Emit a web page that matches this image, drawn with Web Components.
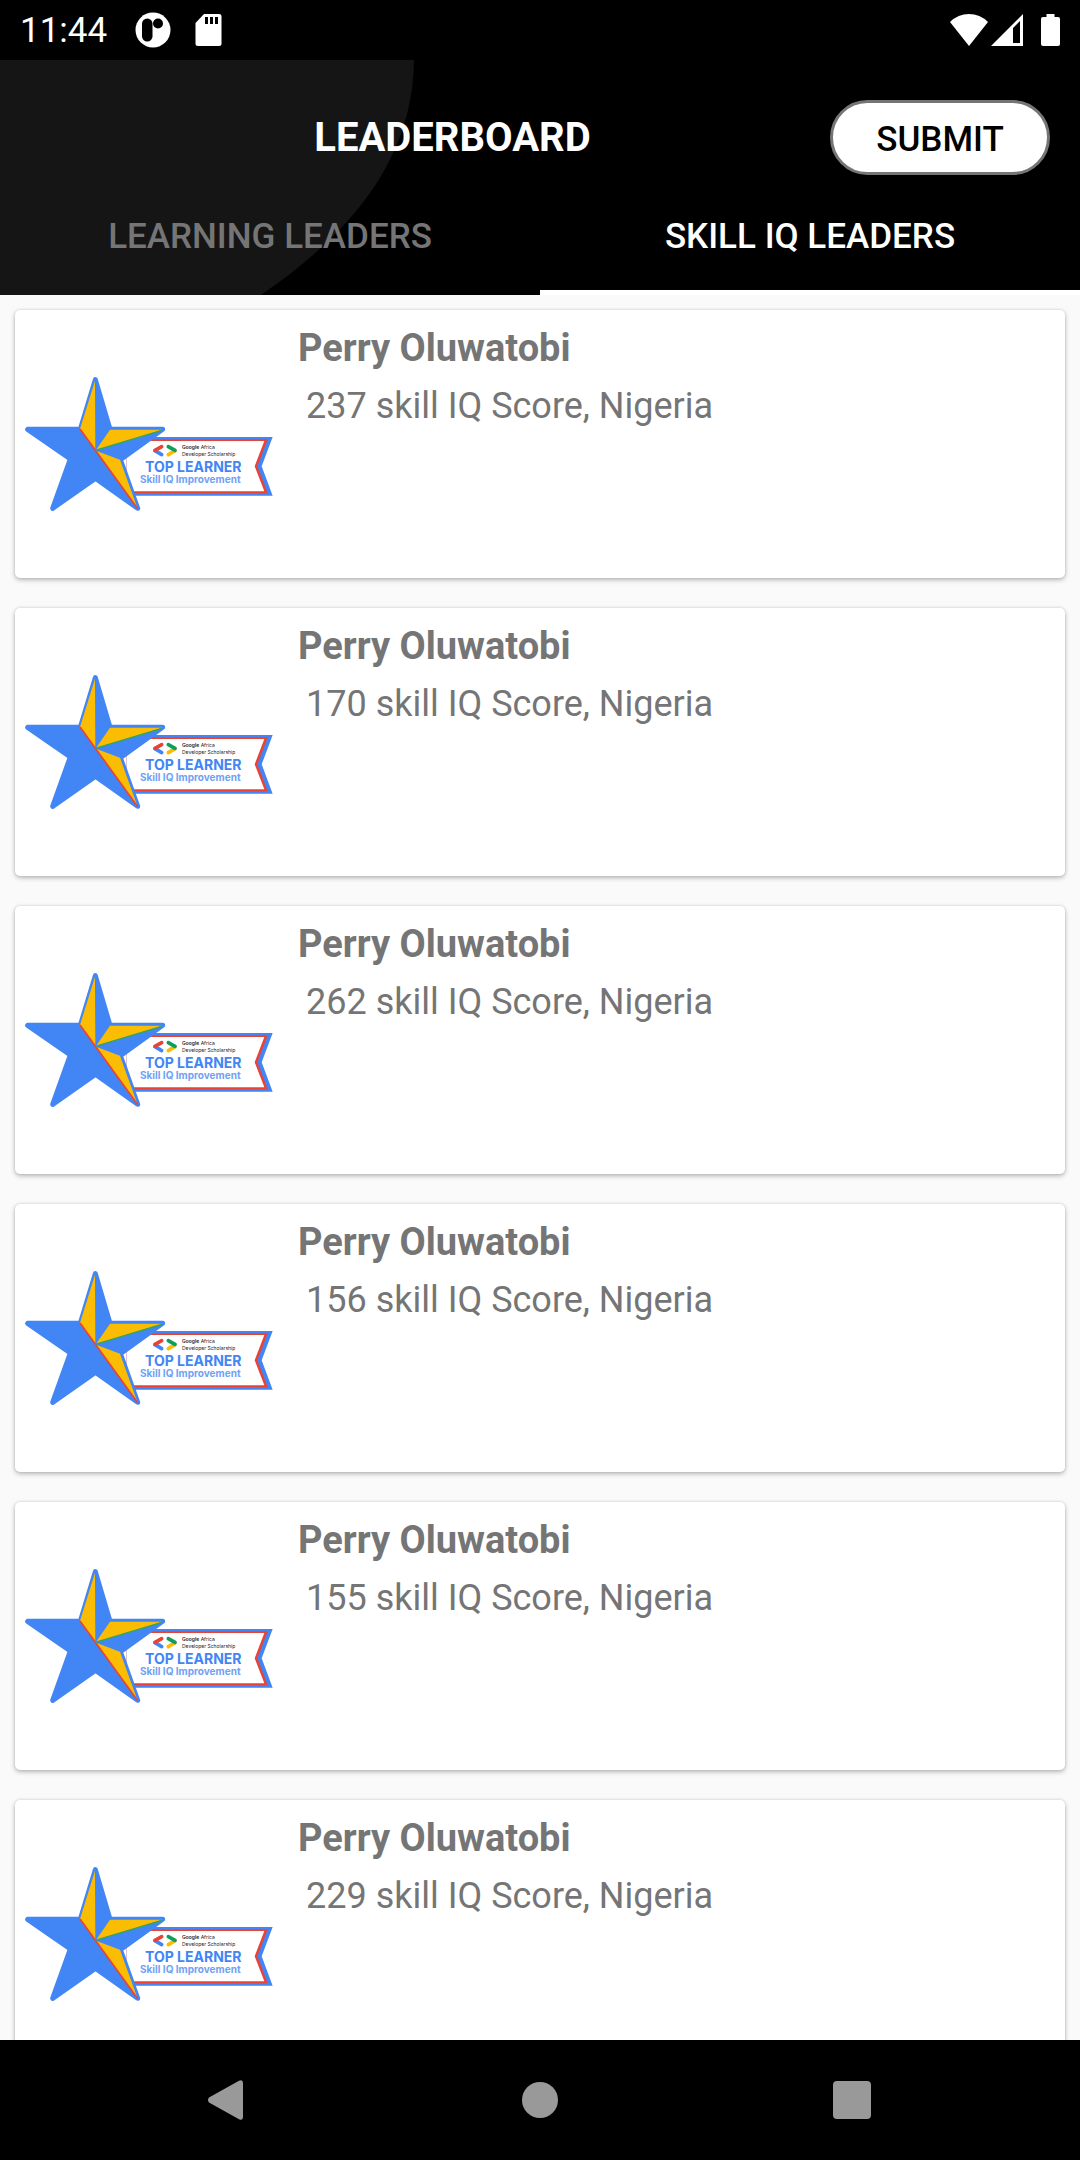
<!DOCTYPE html>
<html lang="en">
<head>
<meta charset="utf-8">
<meta name="viewport" content="width=device-width, initial-scale=1">
<title>Leaderboard</title>
<style>
  html, body { margin: 0; height: 100%; }
  body { font-family: Roboto, sans-serif; background: #fafafa; overflow: hidden; }
</style>
</head>
<body>
<leader-app>
  <status-bar slot="status">11:44</status-bar>
  <app-header slot="header">
    LEADERBOARD
    <app-tab slot="tabs">LEARNING LEADERS</app-tab>
    <app-tab slot="tabs" selected>SKILL IQ LEADERS</app-tab>
  </app-header>
  <leader-card><span slot="name">Perry Oluwatobi</span>237 skill IQ Score, Nigeria</leader-card>
  <leader-card><span slot="name">Perry Oluwatobi</span>170 skill IQ Score, Nigeria</leader-card>
  <leader-card><span slot="name">Perry Oluwatobi</span>262 skill IQ Score, Nigeria</leader-card>
  <leader-card><span slot="name">Perry Oluwatobi</span>156 skill IQ Score, Nigeria</leader-card>
  <leader-card><span slot="name">Perry Oluwatobi</span>155 skill IQ Score, Nigeria</leader-card>
  <leader-card><span slot="name">Perry Oluwatobi</span>229 skill IQ Score, Nigeria</leader-card>
  <nav-bar slot="nav"></nav-bar>
</leader-app>

<script>
const define = (name, html, setup) => {
  const template = document.createElement('template');
  template.innerHTML = html;
  customElements.define(name, class extends HTMLElement {
    constructor() {
      super();
      this.attachShadow({ mode: 'open' }).append(template.content.cloneNode(true));
    }
    connectedCallback() { if (setup) setup(this); }
  });
};

define('leader-app', `
<style>
  :host { display: flex; flex-direction: column; height: 100vh; }
  main { flex: 1; min-height: 0; overflow: hidden; display: flex; flex-direction: column; gap: 30px; padding: 15px 15px 0; box-sizing: border-box; }
</style>
<slot name="status"></slot>
<slot name="header"></slot>
<main><slot></slot></main>
<slot name="nav"></slot>`);

define('status-bar', `
<style>
  :host { display: flex; align-items: center; justify-content: space-between; height: 60px; padding: 0 20px; background: #000; color: #fff; font-size: 35px; line-height: 60px; }
  div { display: flex; align-items: center; }
  time { padding-top: 2px; margin-right: 4px; }
  .left svg { margin-left: 24px; }
  svg { display: block; }
  .battery { margin-left: 18px; }
  .signal { margin-left: 3px; }
</style>
<div class="left">
  <time><slot></slot></time>
  <svg width="36" height="36" viewBox="0 0 36 36" aria-hidden="true"><circle cx="18" cy="18" r="17.5" fill="#fff"/><rect x="7" y="6.500" width="10.500" height="23" rx="5.200" fill="#000"/><circle cx="23" cy="11.500" r="5" fill="#000"/></svg>
  <svg width="27" height="34" viewBox="0 0 27 34" aria-hidden="true"><path d="M9 1H24Q26.500 1 26.500 3.500V30.500Q26.500 33 24 33H3Q.5 33 .5 30.500V10Z" fill="#fff"/><path d="M10 4h3v7h-3zM15 4h3v7h-3zM20 4h3v7h-3z" fill="#000"/></svg>
</div>
<div>
  <svg width="38" height="34" viewBox="0 0 38 34" aria-hidden="true"><path d="M0 9Q8 1 19 1T38 9L19 33Z" fill="#fff"/></svg>
  <svg class="signal" width="32" height="34" viewBox="0 0 32 34" aria-hidden="true"><path fill-rule="evenodd" d="M0 33L32 1V33ZM22 15V30H29V8Z" fill="#fff"/></svg>
  <svg class="battery" width="19" height="34" viewBox="0 0 19 34" aria-hidden="true"><path d="M5.500 1H13.500V4H17Q19 4 19 6V31Q19 33 17 33H2Q0 33 0 31V6Q0 4 2 4H5.500Z" fill="#fff"/></svg>
</div>`);

define('app-header', `
<style>
  :host { display: block; position: relative; background: #000; color: #fff; }
  .arc { position: absolute; top: 0; left: 0; }
  .bar { position: relative; display: flex; align-items: center; padding: 40px 30px 0 75px; }
  h1 { flex: 1; margin: 0; text-align: center; font-size: 40px; line-height: 48px; font-weight: 700; }
  button { box-sizing: border-box; height: 75px; width: 220px; padding: 4px 0 0; border: 3px solid #757575; border-radius: 38px; background: #fff; color: #000; font: 500 35px/40px Roboto, sans-serif; }
  .tabs { position: relative; display: flex; }
</style>
<svg class="arc" width="420" height="235" viewBox="0 0 420 235" aria-hidden="true"><path d="M0 0H414C413 88 365 164 261 235H0Z" fill="#151515"/></svg>
<div class="bar"><h1><slot></slot></h1><button type="button">SUBMIT</button></div>
<div class="tabs" role="tablist"><slot name="tabs"></slot></div>`);

define('app-tab', `
<style>
  :host { display: flex; flex: 1; }
  button { flex: 1; box-sizing: border-box; height: 120px; padding: 8px 0 0; border: 0; border-bottom: 5px solid transparent; background: none; color: #757575; font: 500 35px/40px Roboto, sans-serif; }
  :host([selected]) button { color: #fff; border-color: #fff; }
</style>
<button type="button" role="tab"><slot></slot></button>`, el =>
  el.shadowRoot.querySelector('button').setAttribute('aria-selected', el.hasAttribute('selected')));

define('skill-badge', `
<style>
  :host { display: block; flex: none; }
  svg { display: block; }
  text { font-family: Inter, sans-serif; }
</style>
<svg width="250" height="138" viewBox="25 15 250 138">
  <g transform="scale(.33333)">
    <path d="M380 231H818L785 319L818 407H380Z" fill="#4285f4"/>
    <path d="M380 238H803L772 319L803 400H380Z" fill="#ea4335"/>
    <path d="M380 243H793L764 319L793 394H380Z" fill="#fff"/>
    <path d="M286 59L330 208H488L361 299L413 445L286 355L158 445L211 297L83 208H241Z" fill="#4285f4" stroke="#4285f4" stroke-width="15" stroke-linejoin="round"/>
    <path d="M285 62L240 207L286 270ZM330 209H486L288 270ZM288 272L360 299L412 443Z" fill="#fbbc04"/>
    <path d="M240 207L412 445" stroke="#ea4335" stroke-width="5"/>
    <path d="M286 271L486 211" stroke="#34a853" stroke-width="4"/>
    <g stroke-width="11" stroke-linecap="round">
      <path d="M465 272L485 284" stroke="#4285f4"/><path d="M465 271L485 260" stroke="#ea4335"/>
      <path d="M525 272L505 284" stroke="#fbbc04"/><path d="M505 260L525 271" stroke="#0f9d58"/>
    </g>
  </g>
  <g fill="#202124" font-size="5"><text x="182" y="89"><tspan font-weight="600">Google</tspan> Africa</text><text x="182" y="96">Developer Scholarship</text></g>
  <text x="145" y="112" font-size="14" font-weight="700" fill="#4285f4">TOP LEARNER</text>
  <text x="140" y="123" font-size="10" font-weight="700" fill="#6fa1f5">Skill IQ Improvement</text>
</svg>`);

define('leader-card', `
<style>
  :host { display: flex; flex: none; align-items: center; gap: 23px; box-sizing: border-box; min-height: 268px; padding: 0 10px; border-radius: 5px; background: #fff; color: #757575; box-shadow: 0 2px 5px rgba(0,0,0,.26), 0 0 3px rgba(0,0,0,.12); }
  .text { align-self: stretch; flex: 1; padding-top: 14px; }
  h2 { margin: 0; font-size: 38px; line-height: 48px; font-weight: 700; }
  p { margin: 12px 0 0 8px; font-size: 36px; line-height: 44px; }
</style>
<skill-badge></skill-badge>
<div class="text"><h2><slot name="name"></slot></h2><p><slot></slot></p></div>`);

define('nav-bar', `
<style>
  :host { display: block; background: #000; }
  nav { display: flex; justify-content: center; }
  button { width: 312px; height: 120px; padding: 0; border: 0; background: none; display: flex; align-items: center; justify-content: center; }
  path, circle, rect { fill: #999; }
</style>
<nav>
  <button type="button" aria-label="Back"><svg width="40" height="40" viewBox="0 0 40 40"><path d="M1 17.500L31 .8Q35 -1 35 3V37Q35 41 31 39.200L1 22.500Q-1 20 1 17.500Z"/></svg></button>
  <button type="button" aria-label="Home"><svg width="40" height="40" viewBox="0 0 40 40"><circle cx="20" cy="20" r="18"/></svg></button>
  <button type="button" aria-label="Recent apps"><svg width="40" height="40" viewBox="0 0 40 40"><rect x="1" y="1" width="38" height="38" rx="4"/></svg></button>
</nav>`);
</script>
</body>
</html>
